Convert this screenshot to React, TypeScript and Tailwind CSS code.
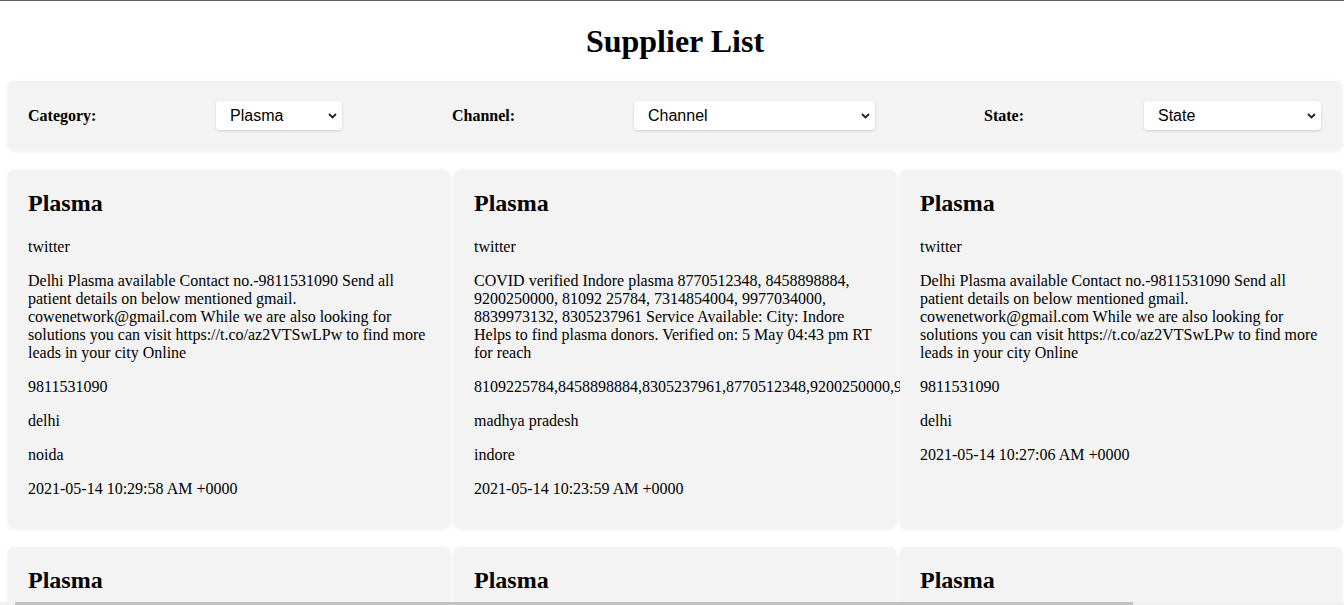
import React from 'react';

interface Supplier {
  id: number;
  category: string;
  channel: string;
  text: string;
  phone: string;
  state: string;
  city?: string;
  time: string;
}

const DELHI_TEXT =
  'Delhi Plasma available Contact no.-9811531090 Send all patient details on below mentioned gmail. cowenetwork@gmail.com While we are also looking for solutions you can visit https://t.co/az2VTSwLPw to find more leads in your city Online';

const INDORE_TEXT =
  'COVID verified Indore plasma 8770512348, 8458898884, 9200250000, 81092 25784, 7314854004, 9977034000, 8839973132, 8305237961 Service Available: City: Indore Helps to find plasma donors. Verified on: 5 May 04:43 pm RT for reach';

const SUPPLIERS: Supplier[] = [
  { id: 1, category: 'Plasma', channel: 'twitter', text: DELHI_TEXT, phone: '9811531090', state: 'delhi', city: 'noida', time: '2021-05-14 10:29:58 AM +0000' },
  { id: 2, category: 'Plasma', channel: 'twitter', text: INDORE_TEXT, phone: '8109225784,8458898884,8305237961,8770512348,9200250000,9977034000,7314854004,8839973132', state: 'madhya pradesh', city: 'indore', time: '2021-05-14 10:23:59 AM +0000' },
  { id: 3, category: 'Plasma', channel: 'twitter', text: DELHI_TEXT, phone: '9811531090', state: 'delhi', time: '2021-05-14 10:27:06 AM +0000' },
  { id: 4, category: 'Plasma', channel: 'twitter', text: DELHI_TEXT, phone: '9811531090', state: 'delhi', city: 'noida', time: '2021-05-14 10:20:12 AM +0000' },
  { id: 5, category: 'Plasma', channel: 'twitter', text: INDORE_TEXT, phone: '8770512348', state: 'madhya pradesh', city: 'indore', time: '2021-05-14 10:18:40 AM +0000' },
  { id: 6, category: 'Plasma', channel: 'twitter', text: DELHI_TEXT, phone: '9811531090', state: 'delhi', time: '2021-05-14 10:15:33 AM +0000' },
];

const Chevron = () => (
  <svg width="9" height="6" viewBox="0 0 9 6" className="pointer-events-none shrink-0">
    <path d="M1 1 L4.5 4.5 L8 1" fill="none" stroke="#222" strokeWidth="1.8" />
  </svg>
);

const Select: React.FC<{ value: string; width: string }> = ({ value, width }) => (
  <div className={`${width} h-[29px] flex items-center justify-between bg-white rounded-[4px] shadow-[0_1px_3px_rgba(0,0,0,0.15)] pl-[14px] pr-[5px] font-['Liberation_Sans',Arial,sans-serif] text-[16px] text-black`}>
    <span>{value}</span>
    <Chevron />
  </div>
);

const SupplierCard: React.FC<{ s: Supplier }> = ({ s }) => (
  <div className="relative bg-[#f3f3f3] rounded-[6px] shadow-[0_1px_4px_rgba(0,0,0,0.08)] pt-[19px] pb-[14px] pl-5 pr-5 text-[16px] leading-[18px] text-black">
    <h2 className="text-[24px] leading-[28px] font-bold mb-[21px]">{s.category}</h2>
    <p className="mb-4">{s.channel}</p>
    <p className="mb-4">{s.text}</p>
    <p className="mb-4">{s.phone}</p>
    <p className="mb-4">{s.state}</p>
    {s.city && <p className="mb-4">{s.city}</p>}
    <p className="mb-4">{s.time}</p>
  </div>
);

export default function App() {
  return (
    <div className="h-[605px] overflow-hidden flex flex-col bg-white border-t border-[#606060] font-['Liberation_Serif','Times_New_Roman',serif]">
      <div className="flex-1 overflow-hidden pl-2 pr-[2px]">
        <h1 className="text-center text-[32px] leading-[37px] font-bold text-black mt-[22px] mb-[21px]">Supplier List</h1>

        {/* Filters */}
        <div className="flex items-center bg-[#f3f3f3] rounded-[6px] shadow-[0_1px_4px_rgba(0,0,0,0.08)] h-[69px] pl-5">
          <label className="w-[188px] font-bold text-[16px]">Category:</label>
          <Select value="Plasma" width="w-[126px]" />
          <label className="ml-[110px] w-[182px] font-bold text-[16px]">Channel:</label>
          <Select value="Channel" width="w-[241px]" />
          <label className="ml-[109px] w-[160px] font-bold text-[16px]">State:</label>
          <Select value="State" width="w-[177px]" />
        </div>

        {/* Cards */}
        <div className="grid grid-cols-3 gap-x-1 gap-y-[19px] mt-5">
          {SUPPLIERS.map((s) => (
            <SupplierCard key={s.id} s={s} />
          ))}
        </div>
      </div>

      {/* horizontal scrollbar strip */}
      <div className="h-[3px] bg-[#f1f1f1] flex shrink-0">
        <div className="ml-[15px] w-[1118px] bg-[#c1c1c1]" />
      </div>
    </div>
  );
}
